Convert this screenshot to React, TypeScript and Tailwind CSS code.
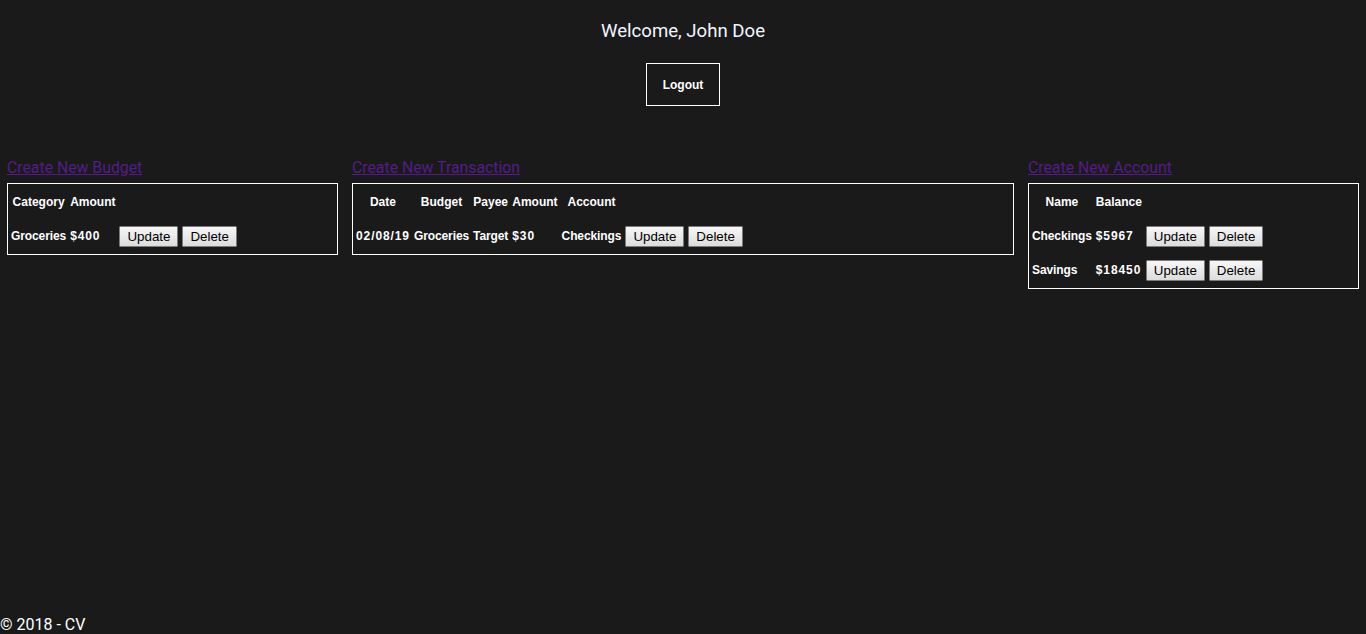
import React from "react";

const btn =
  "font-['Liberation_Sans',Arial,sans-serif] text-[13.333px] leading-[15px] text-black px-[7px] py-[2px] border border-[#7a7a7a] bg-gradient-to-b from-[#f7f7f7] to-[#dcdcdc] rounded-[1px]";

function Btns() {
  return (
    <>
      <td className="px-[1px] align-middle">
        <button className={btn}>Update</button>
      </td>
      <td className="px-[1px] align-middle">
        <button className={btn}>Delete</button>
      </td>
    </>
  );
}

function Th({ children }: { children: React.ReactNode }) {
  return <th className="px-[1px] font-bold text-center align-middle">{children}</th>;
}
function Td({ children, num }: { children: React.ReactNode; num?: boolean }) {
  return (
    <td
      className={
        num
          ? "px-[1px] font-bold text-left align-middle whitespace-nowrap tracking-[0.9px]"
          : "px-[1px] font-bold text-left align-middle whitespace-nowrap tracking-[-0.1px]"
      }
    >
      {children}
    </td>
  );
}

function Box({ children }: { children: React.ReactNode }) {
  return (
    <div className="border border-white">
      <table className="border-separate border-spacing-[2px] text-[12px] text-white font-['Liberation_Sans',Arial,sans-serif]">
        <tbody>{children}</tbody>
      </table>
    </div>
  );
}

function Link({ children }: { children: React.ReactNode }) {
  return (
    <a href="#" className="inline-block text-[15.8px] leading-[19px] text-[#551a8b] underline mb-[6px]">
      {children}
    </a>
  );
}

export default function App() {
  return (
    <div className="min-h-screen flex flex-col bg-[#1a1a1a] text-white font-['Roboto',sans-serif]">
      <div className="flex flex-col items-center pt-[20px]">
        <h1 className="text-[18.6px] leading-[22px] font-normal text-[#f2f6ff]">Welcome, John Doe</h1>
        <button className="mt-[21px] w-[74px] h-[43px] border border-white text-white font-bold text-[12px] font-['Liberation_Sans',Arial,sans-serif]">
          Logout
        </button>
      </div>
      <div className="grid grid-cols-[345px_1fr_345px] mt-[50px]">
        <div className="px-[7px]">
          <Link>Create New Budget</Link>
          <Box>
            <tr className="h-[32px]">
              <Th>Category</Th>
              <Th>Amount</Th>
            </tr>
            <tr className="h-[32px]">
              <Td>Groceries</Td>
              <Td num>$400</Td>
              <Btns />
            </tr>
          </Box>
        </div>
        <div className="px-[7px]">
          <Link>Create New Transaction</Link>
          <Box>
            <tr className="h-[32px]">
              <Th>Date</Th>
              <Th>Budget</Th>
              <Th>Payee</Th>
              <Th>Amount</Th>
              <Th>Account</Th>
            </tr>
            <tr className="h-[32px]">
              <Td num>02/08/19</Td>
              <Td>Groceries</Td>
              <Td>Target</Td>
              <Td num>$30</Td>
              <Td>Checkings</Td>
              <Btns />
            </tr>
          </Box>
        </div>
        <div className="px-[7px]">
          <Link>Create New Account</Link>
          <Box>
            <tr className="h-[32px]">
              <Th>Name</Th>
              <Th>Balance</Th>
            </tr>
            <tr className="h-[32px]">
              <Td>Checkings</Td>
              <Td num>$5967</Td>
              <Btns />
            </tr>
            <tr className="h-[32px]">
              <Td>Savings</Td>
              <Td num>$18450</Td>
              <Btns />
            </tr>
          </Box>
        </div>
      </div>
      <div className="mt-auto text-[16px] leading-[19px]">© 2018 - CV</div>
    </div>
  );
}
